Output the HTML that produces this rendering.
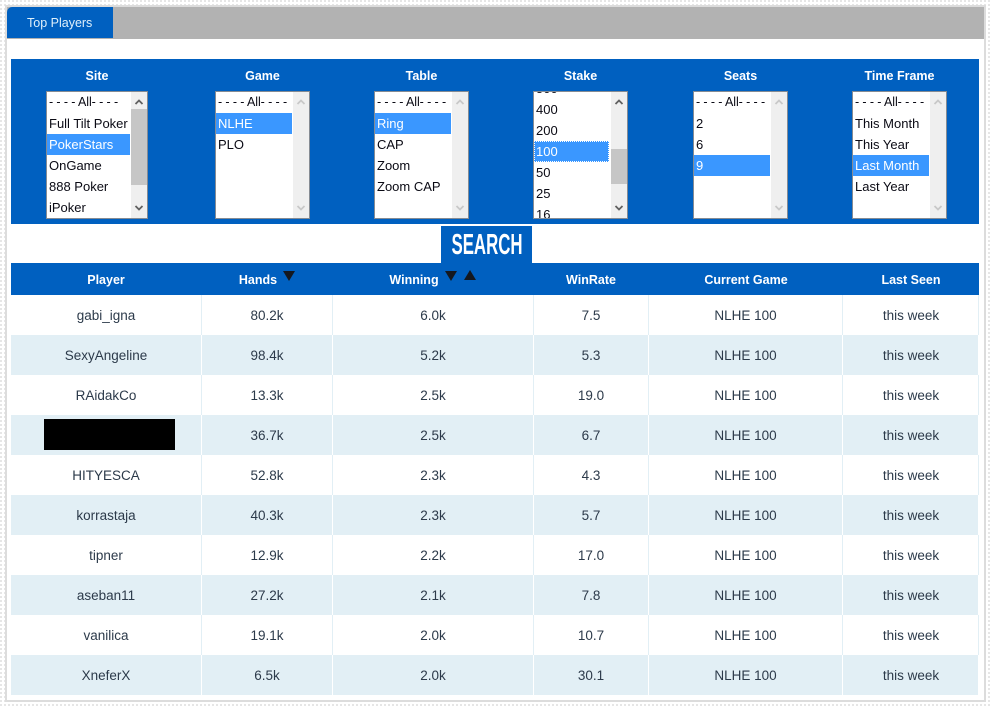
<!DOCTYPE html>
<html><head><meta charset="utf-8"><style>
*{box-sizing:border-box}
html,body{margin:0;padding:0;width:992px;height:707px;overflow:hidden}
body{position:relative;background-color:#fff;background-image:radial-gradient(circle at 1px 1px,#dedede 0.8px,transparent 0.9px);background-size:4px 4px;font-family:"Liberation Sans",sans-serif}
#frame{position:absolute;left:5px;top:5px;width:981px;height:697px;background:#fff;border:2px solid #dcdcdc}
#bar{position:absolute;left:7px;top:7px;width:977px;height:32px;background:#b2b2b2}
#tab{position:absolute;left:7px;top:7px;width:106px;height:31px;background:#0060c0;border-top-left-radius:5px;color:#dff0fb;font-size:12.5px;line-height:33px;padding-left:20px}
#panel{position:absolute;left:11px;top:59px;width:968px;height:165px;background:#0060c0}
.lb{position:absolute;top:68px;height:16px;color:#fff;font-weight:bold;font-size:12.5px;line-height:16px;text-align:center}
.sel{position:absolute;top:91px;height:128px;background:#fff;border:1px solid #858b93;overflow:hidden}
.o{position:absolute;left:0;height:21px;line-height:21px;font-size:13px;color:#0a0a14;padding-left:2px;white-space:nowrap;overflow:hidden}
.o.d{font-size:12.5px;letter-spacing:-.1px}
.hl{background:#3a97ff;color:#fff}
.sb{position:absolute;right:0;top:0;width:16px;height:126px;background:#efefef}
.th{position:absolute;left:0;width:16px;height:76px;top:17px;background:#c6c6c6}
.sb svg{position:absolute;left:3px;width:10px;height:8px}
#search{position:absolute;left:441px;top:226px;width:91px;height:37px;background:#0060c0;overflow:hidden}
#search span{position:absolute;left:45.5px;top:2px;color:#fff;font-weight:bold;font-size:29px;line-height:34px;display:block;white-space:nowrap;transform:translateX(-50%) scaleX(.58)}
#head{position:absolute;left:11px;top:263px;width:968px;height:32px;background:#0060c0}
.h{position:absolute;top:272px;height:16px;line-height:16px;font-size:12.5px;color:#fff;font-weight:bold;text-align:center;white-space:nowrap}
.row{position:absolute;left:11px;width:967px;height:40px}
.row.e{background:#e2eff5}
.c{position:absolute;top:1px;height:40px;line-height:40px;font-size:13.5px;color:#2c3a4a;text-align:center;white-space:nowrap}
.tri{position:absolute}
</style></head><body>
<div id="frame"></div>
<div id="bar"></div>
<div id="tab">Top Players</div>
<div id="panel"></div>

<div class="lb" style="left:46px;width:102px">Site</div>
<div class="lb" style="left:215px;width:95px">Game</div>
<div class="lb" style="left:374px;width:95px">Table</div>
<div class="lb" style="left:533px;width:95px">Stake</div>
<div class="lb" style="left:693px;width:95px">Seats</div>
<div class="lb" style="left:852px;width:95px">Time Frame</div>

<div class="sel" style="left:46px;width:102px">
<div class="o d" style="top:0;width:83px">- - - - All- - - -</div>
<div class="o" style="top:21px;width:83px">Full Tilt Poker</div>
<div class="o hl" style="top:42px;width:83px">PokerStars</div>
<div class="o" style="top:63px;width:83px">OnGame</div>
<div class="o" style="top:84px;width:83px">888 Poker</div>
<div class="o" style="top:105px;width:83px">iPoker</div>
<div class="sb"><div class="th"></div>
<svg style="top:6px" viewBox="0 0 10 8"><path d="M1.5 6L5 2.5L8.5 6" fill="none" stroke="#606060" stroke-width="1.8"/></svg>
<svg style="top:112px" viewBox="0 0 10 8"><path d="M1.5 2L5 5.5L8.5 2" fill="none" stroke="#606060" stroke-width="1.8"/></svg></div></div>

<div class="sel" style="left:215px;width:95px">
<div class="o d" style="top:0;width:76px">- - - - All- - - -</div>
<div class="o hl" style="top:21px;width:76px">NLHE</div>
<div class="o" style="top:42px;width:76px">PLO</div>
<div class="sb">
<svg style="top:6px" viewBox="0 0 10 8"><path d="M1.5 6L5 2.5L8.5 6" fill="none" stroke="#c8c8c8" stroke-width="1.8"/></svg>
<svg style="top:112px" viewBox="0 0 10 8"><path d="M1.5 2L5 5.5L8.5 2" fill="none" stroke="#c8c8c8" stroke-width="1.8"/></svg></div></div>

<div class="sel" style="left:374px;width:95px">
<div class="o d" style="top:0;width:76px">- - - - All- - - -</div>
<div class="o hl" style="top:21px;width:76px">Ring</div>
<div class="o" style="top:42px;width:76px">CAP</div>
<div class="o" style="top:63px;width:76px">Zoom</div>
<div class="o" style="top:84px;width:76px">Zoom CAP</div>
<div class="sb">
<svg style="top:6px" viewBox="0 0 10 8"><path d="M1.5 6L5 2.5L8.5 6" fill="none" stroke="#c8c8c8" stroke-width="1.8"/></svg>
<svg style="top:112px" viewBox="0 0 10 8"><path d="M1.5 2L5 5.5L8.5 2" fill="none" stroke="#c8c8c8" stroke-width="1.8"/></svg></div></div>

<div class="sel" style="left:533px;width:95px">
<div class="o" style="top:-14px;width:76px">500</div>
<div class="o" style="top:7px;width:76px">400</div>
<div class="o" style="top:28px;width:76px">200</div>
<div class="o hl" style="top:49px;width:75px;outline:1px dotted #fff;outline-offset:-1px">100</div>
<div class="o" style="top:70px;width:76px">50</div>
<div class="o" style="top:91px;width:76px">25</div>
<div class="o" style="top:112px;width:76px">16</div>
<div class="sb"><div class="th" style="top:57px;height:35px"></div>
<svg style="top:6px" viewBox="0 0 10 8"><path d="M1.5 6L5 2.5L8.5 6" fill="none" stroke="#606060" stroke-width="1.8"/></svg>
<svg style="top:112px" viewBox="0 0 10 8"><path d="M1.5 2L5 5.5L8.5 2" fill="none" stroke="#606060" stroke-width="1.8"/></svg></div></div>

<div class="sel" style="left:693px;width:95px">
<div class="o d" style="top:0;width:76px">- - - - All- - - -</div>
<div class="o" style="top:21px;width:76px">2</div>
<div class="o" style="top:42px;width:76px">6</div>
<div class="o hl" style="top:63px;width:76px">9</div>
<div class="sb">
<svg style="top:6px" viewBox="0 0 10 8"><path d="M1.5 6L5 2.5L8.5 6" fill="none" stroke="#c8c8c8" stroke-width="1.8"/></svg>
<svg style="top:112px" viewBox="0 0 10 8"><path d="M1.5 2L5 5.5L8.5 2" fill="none" stroke="#c8c8c8" stroke-width="1.8"/></svg></div></div>

<div class="sel" style="left:852px;width:95px">
<div class="o d" style="top:0;width:76px">- - - - All- - - -</div>
<div class="o" style="top:21px;width:76px">This Month</div>
<div class="o" style="top:42px;width:76px">This Year</div>
<div class="o hl" style="top:63px;width:76px">Last Month</div>
<div class="o" style="top:84px;width:76px">Last Year</div>
<div class="sb">
<svg style="top:6px" viewBox="0 0 10 8"><path d="M1.5 6L5 2.5L8.5 6" fill="none" stroke="#c8c8c8" stroke-width="1.8"/></svg>
<svg style="top:112px" viewBox="0 0 10 8"><path d="M1.5 2L5 5.5L8.5 2" fill="none" stroke="#c8c8c8" stroke-width="1.8"/></svg></div></div>

<div id="search"><span>SEARCH</span></div>
<div id="head"></div>
<div class="h" style="left:11px;width:190px">Player</div>
<div class="h" style="left:238px;width:40px">Hands</div>
<div class="h" style="left:388px;width:52px">Winning</div>
<div class="h" style="left:533px;width:116px">WinRate</div>
<div class="h" style="left:648px;width:196px">Current Game</div>
<div class="h" style="left:844px;width:134px">Last Seen</div>
<svg class="tri" style="left:283px;top:271px" width="12" height="10"><path d="M0 0H12L6 10Z" fill="#14181f"/></svg>
<svg class="tri" style="left:445px;top:271px" width="12" height="10"><path d="M0 0H12L6 10Z" fill="#14181f"/></svg>
<svg class="tri" style="left:464px;top:270px" width="12" height="10"><path d="M0 10H12L6 0Z" fill="#14181f"/></svg>

<div class="row" style="top:295px"><div class="c" style="left:0;width:190px">gabi_igna</div><div class="c" style="left:191px;width:130px">80.2k</div><div class="c" style="left:322px;width:200px">6.0k</div><div class="c" style="left:523px;width:114px">7.5</div><div class="c" style="left:638px;width:193px">NLHE 100</div><div class="c" style="left:833px;width:134px">this week</div></div>
<div class="row e" style="top:335px"><div class="c" style="left:0;width:190px">SexyAngeline</div><div class="c" style="left:191px;width:130px">98.4k</div><div class="c" style="left:322px;width:200px">5.2k</div><div class="c" style="left:523px;width:114px">5.3</div><div class="c" style="left:638px;width:193px">NLHE 100</div><div class="c" style="left:833px;width:134px">this week</div></div>
<div class="row" style="top:375px"><div class="c" style="left:0;width:190px">RAidakCo</div><div class="c" style="left:191px;width:130px">13.3k</div><div class="c" style="left:322px;width:200px">2.5k</div><div class="c" style="left:523px;width:114px">19.0</div><div class="c" style="left:638px;width:193px">NLHE 100</div><div class="c" style="left:833px;width:134px">this week</div></div>
<div class="row e" style="top:415px"><div class="c" style="left:191px;width:130px">36.7k</div><div class="c" style="left:322px;width:200px">2.5k</div><div class="c" style="left:523px;width:114px">6.7</div><div class="c" style="left:638px;width:193px">NLHE 100</div><div class="c" style="left:833px;width:134px">this week</div></div>
<div class="row" style="top:455px"><div class="c" style="left:0;width:190px">HITYESCA</div><div class="c" style="left:191px;width:130px">52.8k</div><div class="c" style="left:322px;width:200px">2.3k</div><div class="c" style="left:523px;width:114px">4.3</div><div class="c" style="left:638px;width:193px">NLHE 100</div><div class="c" style="left:833px;width:134px">this week</div></div>
<div class="row e" style="top:495px"><div class="c" style="left:0;width:190px">korrastaja</div><div class="c" style="left:191px;width:130px">40.3k</div><div class="c" style="left:322px;width:200px">2.3k</div><div class="c" style="left:523px;width:114px">5.7</div><div class="c" style="left:638px;width:193px">NLHE 100</div><div class="c" style="left:833px;width:134px">this week</div></div>
<div class="row" style="top:535px"><div class="c" style="left:0;width:190px">tipner</div><div class="c" style="left:191px;width:130px">12.9k</div><div class="c" style="left:322px;width:200px">2.2k</div><div class="c" style="left:523px;width:114px">17.0</div><div class="c" style="left:638px;width:193px">NLHE 100</div><div class="c" style="left:833px;width:134px">this week</div></div>
<div class="row e" style="top:575px"><div class="c" style="left:0;width:190px">aseban11</div><div class="c" style="left:191px;width:130px">27.2k</div><div class="c" style="left:322px;width:200px">2.1k</div><div class="c" style="left:523px;width:114px">7.8</div><div class="c" style="left:638px;width:193px">NLHE 100</div><div class="c" style="left:833px;width:134px">this week</div></div>
<div class="row" style="top:615px"><div class="c" style="left:0;width:190px">vanilica</div><div class="c" style="left:191px;width:130px">19.1k</div><div class="c" style="left:322px;width:200px">2.0k</div><div class="c" style="left:523px;width:114px">10.7</div><div class="c" style="left:638px;width:193px">NLHE 100</div><div class="c" style="left:833px;width:134px">this week</div></div>
<div class="row e" style="top:655px"><div class="c" style="left:0;width:190px">XneferX</div><div class="c" style="left:191px;width:130px">6.5k</div><div class="c" style="left:322px;width:200px">2.0k</div><div class="c" style="left:523px;width:114px">30.1</div><div class="c" style="left:638px;width:193px">NLHE 100</div><div class="c" style="left:833px;width:134px">this week</div></div>

<svg style="position:absolute;left:0;top:0" width="992" height="707">
<g fill="#e2eff5">
<rect x="201" y="295" width="1" height="40"/><rect x="332" y="295" width="1" height="40"/><rect x="533" y="295" width="1" height="40"/><rect x="648" y="295" width="1" height="40"/><rect x="842" y="295" width="1" height="40"/><rect x="978" y="295" width="1" height="40"/>
<rect x="201" y="375" width="1" height="40"/><rect x="332" y="375" width="1" height="40"/><rect x="533" y="375" width="1" height="40"/><rect x="648" y="375" width="1" height="40"/><rect x="842" y="375" width="1" height="40"/><rect x="978" y="375" width="1" height="40"/>
<rect x="201" y="455" width="1" height="40"/><rect x="332" y="455" width="1" height="40"/><rect x="533" y="455" width="1" height="40"/><rect x="648" y="455" width="1" height="40"/><rect x="842" y="455" width="1" height="40"/><rect x="978" y="455" width="1" height="40"/>
<rect x="201" y="535" width="1" height="40"/><rect x="332" y="535" width="1" height="40"/><rect x="533" y="535" width="1" height="40"/><rect x="648" y="535" width="1" height="40"/><rect x="842" y="535" width="1" height="40"/><rect x="978" y="535" width="1" height="40"/>
<rect x="201" y="615" width="1" height="40"/><rect x="332" y="615" width="1" height="40"/><rect x="533" y="615" width="1" height="40"/><rect x="648" y="615" width="1" height="40"/><rect x="842" y="615" width="1" height="40"/><rect x="978" y="615" width="1" height="40"/>
</g>
<g fill="#fff">
<rect x="201" y="335" width="1" height="40"/><rect x="332" y="335" width="1" height="40"/><rect x="533" y="335" width="1" height="40"/><rect x="648" y="335" width="1" height="40"/><rect x="842" y="335" width="1" height="40"/>
<rect x="201" y="415" width="1" height="40"/><rect x="332" y="415" width="1" height="40"/><rect x="533" y="415" width="1" height="40"/><rect x="648" y="415" width="1" height="40"/><rect x="842" y="415" width="1" height="40"/>
<rect x="201" y="495" width="1" height="40"/><rect x="332" y="495" width="1" height="40"/><rect x="533" y="495" width="1" height="40"/><rect x="648" y="495" width="1" height="40"/><rect x="842" y="495" width="1" height="40"/>
<rect x="201" y="575" width="1" height="40"/><rect x="332" y="575" width="1" height="40"/><rect x="533" y="575" width="1" height="40"/><rect x="648" y="575" width="1" height="40"/><rect x="842" y="575" width="1" height="40"/>
<rect x="201" y="655" width="1" height="40"/><rect x="332" y="655" width="1" height="40"/><rect x="533" y="655" width="1" height="40"/><rect x="648" y="655" width="1" height="40"/><rect x="842" y="655" width="1" height="40"/>
</g>
<rect x="44" y="419" width="131" height="31" fill="#000"/>
</svg>
</body></html>
